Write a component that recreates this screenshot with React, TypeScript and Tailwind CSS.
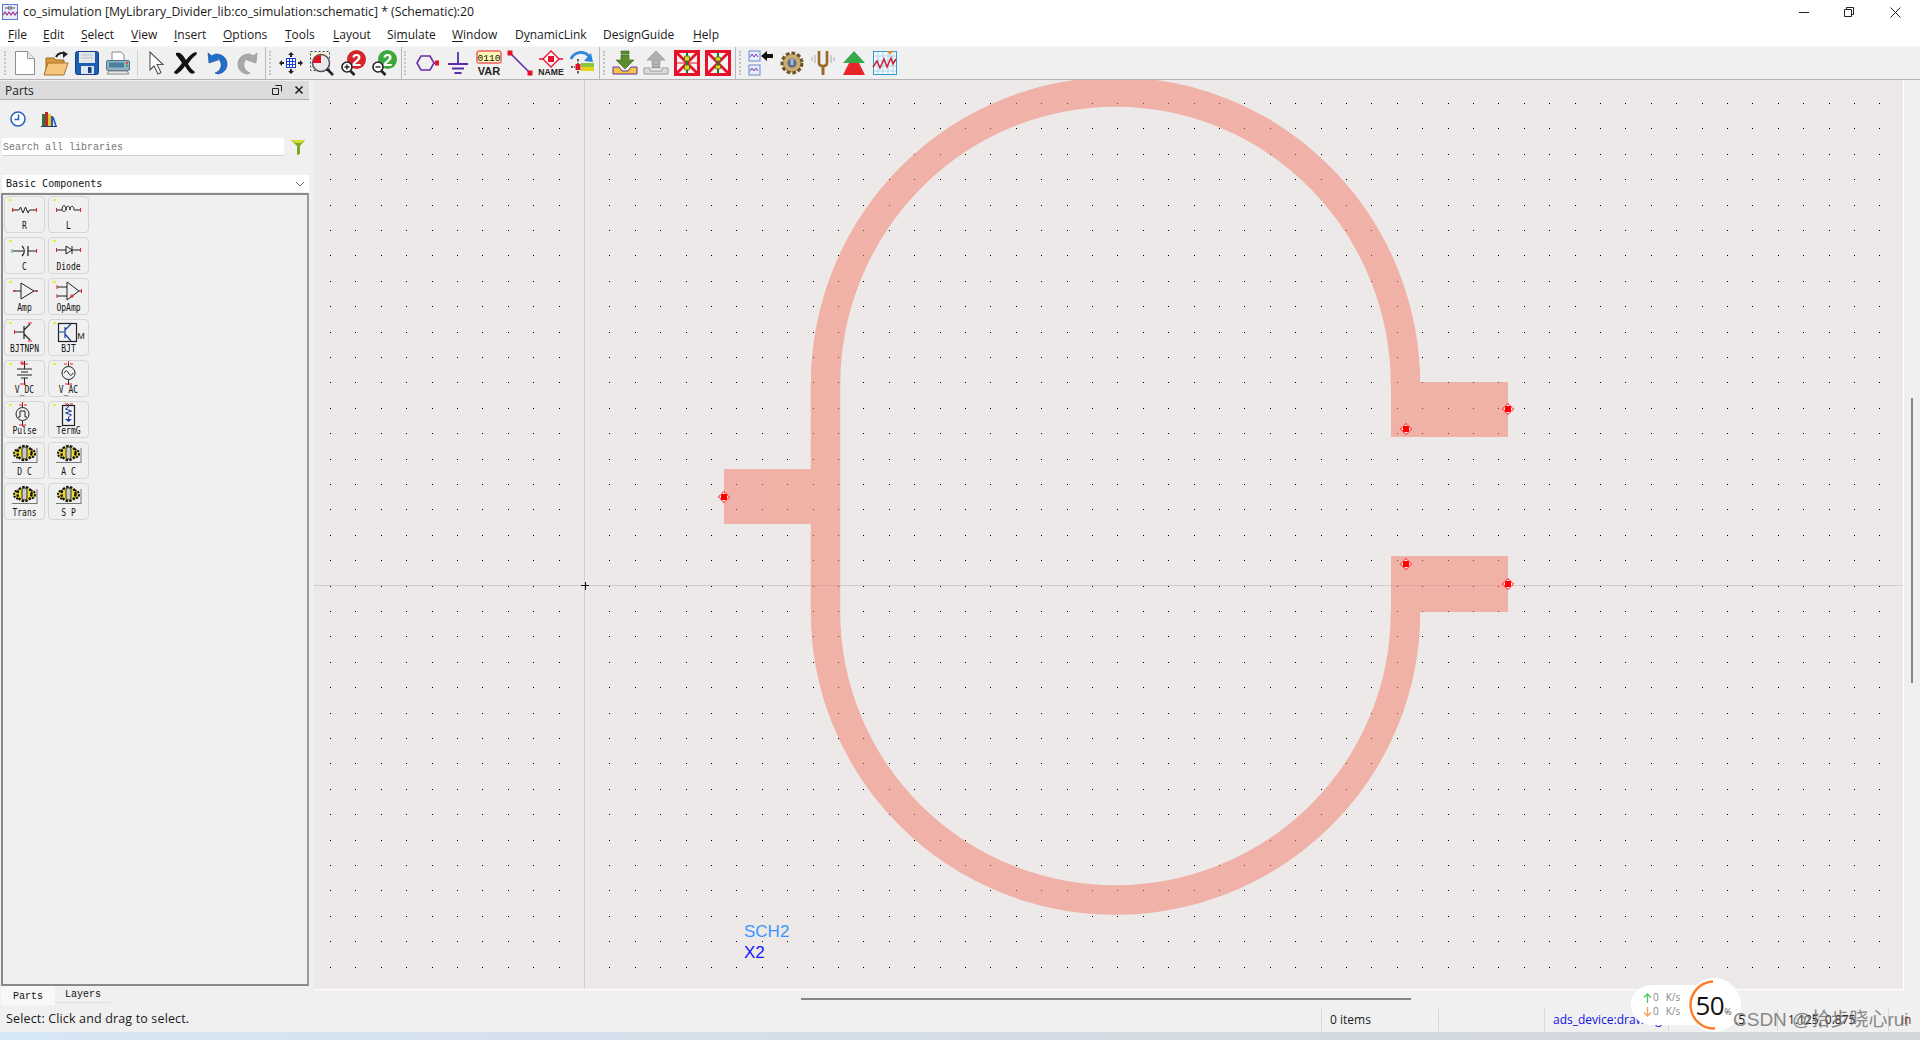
import React from "react";

const UI = { fontFamily: '"Open Sans","Noto Sans",sans-serif' };
const MONO = { fontFamily: '"DejaVu Sans Mono","Liberation Mono",monospace' };
const COURIER = { fontFamily: '"Liberation Mono",monospace' };

function I({ children }: { children: React.ReactNode }) {
  return (
    <div className="w-[31px] h-[26px] flex items-center justify-center shrink-0">
      <svg width="26" height="26" viewBox="0 0 26 26">{children}</svg>
    </div>
  );
}

function Handle({ ml }: { ml: string }) {
  return (
    <div className={`${ml} w-[3px] h-[24px] shrink-0 border-l-2 border-dotted border-[#c4c4c4]`} />
  );
}

const RedFrame = ({ v }: { v: number }) => (
  <I>
    <rect x="1.5" y="1.5" width="23" height="23" fill="#f4f4f4" stroke="#e8102a" strokeWidth="3" />
    <path d="M2 2 24 24M24 2 2 24" stroke="#e8102a" strokeWidth="2.8" />
    {v === 0 ? (
      <>
        <path d="M3 13h20" stroke="#e8102a" strokeWidth="1" />
        <path d="M13 3v20" stroke="#1c7a2e" strokeWidth="2" />
        <rect x="10.5" y="6" width="5" height="5" rx="1" fill="#e6d41c" stroke="#4a7a1c" />
        <rect x="10.5" y="15" width="5" height="5" rx="1" fill="#e6d41c" stroke="#4a7a1c" />
      </>
    ) : (
      <>
        <path d="M13 3v20" stroke="#1c7a2e" strokeWidth="2" />
        <rect x="10.5" y="7" width="5" height="4" rx="1" fill="#e6d41c" stroke="#4a7a1c" />
        <rect x="10.5" y="15" width="5" height="4" rx="1" fill="#e6d41c" stroke="#4a7a1c" />
      </>
    )}
  </I>
);

function Toolbar() {
  return (
    <div className="h-[34px] bg-[#f0f0f0] border-t border-[#f8f8f8] border-b border-b-[#b4b4b4] flex items-center relative shrink-0">
      <Handle ml="ml-[4px] absolute left-0" />
      <div className="ml-[9px] flex">
        <I>
          <path d="M3.5 1.5h12l7 7v16h-19z" fill="#fff" stroke="#8d8d8d" />
          <path d="M15.5 1.5v7h7" fill="#e8e8e8" stroke="#9a9a9a" />
        </I>
        <I>
          <path d="M3 8h8l2 2h8v14H3z" fill="#d99a3c" stroke="#9a6a20" />
          <path d="M1 25 5 13h20l-4 12z" fill="#f4c77c" stroke="#a8742a" />
          <path d="M13 7c2-4 6-5 9-3" fill="none" stroke="#222" strokeWidth="2" />
          <path d="M20 1l5 3-5 4z" fill="#222" />
        </I>
        <I>
          <rect x="1.5" y="1.5" width="23" height="23" rx="2" fill="#1b5fb4" stroke="#123f86" />
          <rect x="5" y="2" width="16" height="11" fill="#e6e6e6" />
          <path d="M7 5h12M7 8h12" stroke="#b8c4d4" />
          <rect x="7" y="16" width="13" height="8" fill="#dfe6ef" />
          <rect x="14" y="17" width="3.5" height="6" fill="#123f86" />
        </I>
        <I>
          <path d="M7 11V2h9l3 3v6" fill="#fff" stroke="#888" />
          <rect x="1.5" y="10.5" width="23" height="10" rx="1.5" fill="#8fb4c8" stroke="#4f7186" />
          <rect x="4" y="12.5" width="15" height="5" fill="#4a7f9e" />
          <rect x="21" y="12" width="2" height="2" fill="#e04a3a" />
          <rect x="21" y="15" width="2" height="2" fill="#4aa84a" />
          <path d="M4 21h18l2 3H2z" fill="#e8e8e8" stroke="#888" />
        </I>
      </div>
      <div className="ml-[4px] w-px h-[26px] bg-[#d2d2d2] shrink-0" />
      <div className="ml-px flex">
        <I>
          <path d="M9 2v18l4-4 4 8 3-1.5-4-8h6z" fill="#fff" stroke="#555" strokeWidth="1.1" transform="translate(-1 0)" />
        </I>
        <I>
          <path d="M3 3c3-1 6 0 10 7 3-4 6-7 10-8 1 1 1 2 0 3-4 3-6 6-8 9 2 3 4 6 7 8-1 2-3 2-5 1-2-2-4-5-5-7-2 3-5 6-8 8-2 0-3-1-3-2 3-3 6-6 8-9-2-3-4-6-6-8z" fill="#111" />
        </I>
        <I>
          <path d="M4 3l1 10 9-3-3-2c4 0 7 4 6 9-1 3-3 5-6 6l3 1c6-1 9-5 9-10 0-6-5-10-11-10-1 0-3 1-4 2z" fill="#1f6fd0" stroke="#123f86" strokeWidth=".6" />
        </I>
        <I>
          <path d="M22 3l-1 10-9-3 3-2c-4 0-7 4-6 9 1 3 3 5 6 6l-3 1C6 23 3 19 3 14 3 8 8 4 14 4c1 0 3 1 4 2z" fill="#a9a9a9" stroke="#8a8a8a" strokeWidth=".6" />
        </I>
      </div>
      <div className="ml-[2px] w-px h-[33px] bg-[#b8b8b8] shrink-0" />
      <Handle ml="ml-[3px]" />
      <div className="ml-[3px] flex">
        <I>
          <rect x="8.5" y="8.5" width="9" height="9" fill="#fff" stroke="#1a3fd0" />
          <path d="M11.5 8.5v9M14.5 8.5v9M8.5 11.5h9M8.5 14.5h9" stroke="#1a3fd0" />
          <path d="M13 2l-3 3h2v2h2V5h2zM13 24l-3-3h2v-2h2v2h2zM1 13l3-3v2h2v2H4v2zM25 13l-3-3v2h-2v2h2v2z" fill="#222" />
        </I>
        <I>
          <rect x="1.5" y="1.5" width="19" height="19" fill="#f3f1c8" stroke="#2a3aa0" strokeDasharray="2 2" />
          <circle cx="12" cy="13" r="8.5" fill="#e8e8ee" stroke="#555" strokeWidth="1.5" />
          <path d="M12 13V5a8 8 0 0 0-8 8z" fill="#e01020" />
          <path d="M18 19l6 6" stroke="#222" strokeWidth="2.5" />
        </I>
        <I>
          <circle cx="16.5" cy="9.5" r="9.5" fill="#d4242a" />
          <text x="16.5" y="15.5" textAnchor="middle" fontSize="17" fontWeight="700" fill="#fff" fontFamily="Liberation Sans">2</text>
          <circle cx="7" cy="17" r="5" fill="#fff" stroke="#222" strokeWidth="1.6" />
          <path d="M4.500 17h5M7 14.500v5" stroke="#222" strokeWidth="1.4" />
          <path d="M10.500 21l4 4" stroke="#222" strokeWidth="2.6" />
        </I>
        <I>
          <circle cx="16.5" cy="9.5" r="9.5" fill="#3ca83c" />
          <text x="16.5" y="15.5" textAnchor="middle" fontSize="17" fontWeight="700" fill="#fff" fontFamily="Liberation Sans">2</text>
          <circle cx="7" cy="17" r="5" fill="#fff" stroke="#222" strokeWidth="1.6" />
          <path d="M4.500 17h5" stroke="#222" strokeWidth="1.4" />
          <path d="M10.500 21l4 4" stroke="#222" strokeWidth="2.6" />
        </I>
      </div>
      <div className="ml-[2px] w-px h-[33px] bg-[#b8b8b8] shrink-0" />
      <Handle ml="ml-[2px]" />
      <div className="ml-[4px] flex">
        <I>
          <path d="M7 6h9l4 7-4 7H7l-4-7z" fill="none" stroke="#6a2da8" strokeWidth="1.6" />
          <path d="M20 13h3" stroke="#6a2da8" strokeWidth="1.4" />
          <rect x="21" y="10.5" width="4" height="5" fill="#e8102a" />
        </I>
        <I>
          <path d="M13 2v12M3 14h20M7 18.5h12M9.5 23h7" stroke="#5a2da8" strokeWidth="1.8" />
        </I>
        <I>
          <rect x="1" y="1" width="24" height="12" rx="1.5" fill="#fdf6b0" stroke="#e8102a" />
          <text x="13" y="10.5" textAnchor="middle" fontSize="9.5" fill="#111" fontFamily="Liberation Mono">0110</text>
          <text x="13" y="24.5" textAnchor="middle" fontSize="11" fontWeight="700" fill="#222" fontFamily="Liberation Sans">VAR</text>
        </I>
        <I>
          <path d="M3 3 23 23" stroke="#5a2da8" strokeWidth="1.6" />
          <rect x="0.5" y="0.5" width="5" height="5" fill="#e8102a" />
          <rect x="20.5" y="20.5" width="5" height="5" fill="#e8102a" />
        </I>
        <I>
          <path d="M1 9h6M19 9h6" stroke="#e8102a" strokeWidth="1.3" />
          <path d="M13 1l8 8-8 8-8-8z" fill="#fff" stroke="#e8102a" strokeWidth="1.3" />
          <rect x="10" y="6" width="6" height="6" fill="#e8102a" />
          <text x="13" y="25" textAnchor="middle" fontSize="8.6" fontWeight="700" fill="#222" fontFamily="Liberation Sans">NAME</text>
        </I>
        <I>
          <path d="M2 9c3-7 12-9 18-3" fill="none" stroke="#2a86d8" strokeWidth="2.8" />
          <path d="M15 11l9 1-2-9z" fill="#2a86d8" />
          <path d="M9 9v15" stroke="#222" strokeDasharray="2.5 1.5" strokeWidth="1.4" />
          <path d="M2 17h4" stroke="#222" strokeDasharray="2 1.2" strokeWidth="1.4" />
          <rect x="6.5" y="14" width="5" height="6" fill="#e8102a" />
          <rect x="12" y="13" width="13" height="4" fill="#8cc63c" />
          <rect x="12" y="17" width="13" height="4" fill="#e6d41c" />
        </I>
      </div>
      <div className="ml-[2px] w-px h-[33px] bg-[#b8b8b8] shrink-0" />
      <Handle ml="ml-[3px]" />
      <div className="ml-[3px] flex">
        <I>
          <path d="M9 1h8v3H9zM9 5h8v5h5l-9 9-9-9h5z" fill="#5a8c2e" stroke="#3c6a1c" strokeWidth=".6" />
          <path d="M1 17h6l3 4h6l3-4h6v7H1z" fill="#f4c640" stroke="#6a2da8" />
        </I>
        <I>
          <path d="M13 1l9 9h-5v5H9v-5H4zM9 16h8v2H9z" fill="#b0b0b0" stroke="#8c8c8c" strokeWidth=".6" />
          <path d="M1 18h6v3h12v-3h6v6H1z" fill="#dcdcdc" stroke="#9a9a9a" />
        </I>
        <RedFrame v={0} />
        <RedFrame v={1} />
      </div>
      <div className="ml-[2px] w-px h-[33px] bg-[#b8b8b8] shrink-0" />
      <Handle ml="ml-[3px]" />
      <div className="ml-[3px] flex">
        <I>
          <rect x="1" y="1" width="11" height="10" fill="#e6ecf8" stroke="#6a8ad0" />
          <rect x="1" y="15" width="11" height="10" fill="#e6ecf8" stroke="#6a8ad0" />
          <path d="M2 7l2-3 2 3 2-3 2 3M2 21l2-3 2 3 2-3 2 3" fill="none" stroke="#7a3ab0" />
          <path d="M13 6l6-5v3h6v4h-6v3z" fill="#111" />
        </I>
        <I>
          <circle cx="13" cy="13" r="9.500" fill="#b89a5a" stroke="#6a5428" strokeWidth="4" strokeDasharray="3.5 2" />
          <circle cx="13" cy="13" r="8.500" fill="#c8ac70" />
          <circle cx="13" cy="13" r="4.500" fill="#5a6a8a" />
          <rect x="11.5" y="9" width="3" height="6" fill="#a8b8d0" />
        </I>
        <I>
          <path d="M9 1v12c0 2 2 3 4 3s4-1 4-3V1" fill="none" stroke="#9a6a2a" strokeWidth="2.6" />
          <path d="M13 16v9" stroke="#9a6a2a" strokeWidth="3" />
          <path d="M5 5v8M2 7v4M21 5v8M24 7v4" stroke="#aaa" />
        </I>
        <I>
          <path d="M13 1l11 12h-6v0H8v0H2z" fill="#3aa84a" />
          <path d="M8 13h10l6 12H2z" fill="#e8242a" />
        </I>
        <I>
          <rect x="1.5" y="1.5" width="23" height="23" fill="#f4f9fc" stroke="#3a9ad0" />
          <path d="M6 2v22M11 2v22M16 2v22M21 2v22M2 6h22M2 11h22M2 16h22M2 21h22" stroke="#9cd0e8" strokeWidth=".8" />
          <path d="M1 17l4-6 3 7 4-9 3 8 4-9 2 6 3-5" fill="none" stroke="#c81e3a" strokeWidth="1.5" />
          <path d="M15 1h6l-3 4z" fill="#e88a2a" />
        </I>
      </div>
    </div>
  );
}

const W = "#222";
const Rd = "#ee1c24";
function Pins({ d }: { d: string }) {
  return <path d={d} stroke={Rd} strokeWidth="1" fill="none" />;
}
function Gear() {
  return (
    <>
      <path d="M8 20.500h25M33 6v15" stroke="#777" fill="none" />
      <circle cx="14" cy="11.500" r="4" fill="#f4e23a" stroke="#111" strokeWidth="2" strokeDasharray="2 1" />
      <circle cx="27" cy="11.500" r="4" fill="#f4e23a" stroke="#111" strokeWidth="2" strokeDasharray="2 1" />
      <circle cx="20.500" cy="11" r="7" fill="#f4e23a" stroke="#111" strokeWidth="2.400" strokeDasharray="2.500 1.300" />
      <circle cx="20.500" cy="11" r="5.500" fill="#ecd92e" />
      <rect x="18" y="5" width="5" height="12" rx="2" fill="#c8ccc8" stroke="#333" strokeWidth="1" />
    </>
  );
}

const partIcons: Record<string, React.ReactNode> = {
  R: (
    <>
      <path d="M9 14h6l1.5-3 2.5 6 2.5-6 2.5 6 1.5-3h6" stroke={W} fill="none" />
      <Pins d="M8.500 12v4M32.500 12v4M8.500 14h2M30.500 14h2" />
    </>
  ),
  L: (
    <>
      <path d="M9 14h5c0-6 4-6 4 0 0-5 4-5 4 0 0-5 4-5 4 0h6M14 14c1 2 3 2 4 0" stroke={W} fill="none" />
      <Pins d="M32.500 12v4M8.500 12v4" />
    </>
  ),
  C: (
    <>
      <path d="M9 14h11M24 14h9M24 9v10" stroke={W} fill="none" strokeWidth="1.2" />
      <path d="M18 9c3 3 3 7 0 10" stroke={W} fill="none" strokeWidth="1.2" />
      <Pins d="M32.500 12v4" />
      <path d="M8 12v4" stroke="#2aa8a8" />
    </>
  ),
  Diode: (
    <>
      <path d="M9 13h9M24 13h9M24 9v8M18 9v8l6-4z" stroke={W} fill="none" />
      <Pins d="M8.500 11v4M32.500 11v4" />
    </>
  ),
  Amp: (
    <>
      <path d="M9 13h8M30 13h4M17 5v16l13-8z" stroke={W} fill="none" />
      <Pins d="M9 13h3M31 13h3" />
    </>
  ),
  OpAmp: (
    <>
      <path d="M9 9h10M9 18h10M31 13h3M19 4v18l12-9z" stroke={W} fill="none" />
      <path d="M22 18h4M24 16v4" stroke={Rd} />
      <Pins d="M9 7v4M9 16v4M33.500 11v4" />
    </>
  ),
  BJTNPN: (
    <>
      <path d="M10 13h10M20 7v13M20 11l6-6M20 15l6 6" stroke={W} fill="none" strokeWidth="1.2" />
      <Pins d="M10.500 11v4M24 4h4M24 22h4" />
    </>
  ),
  BJT: (
    <>
      <rect x="10.500" y="4.500" width="18" height="18" fill="none" stroke="#222" strokeWidth="1.2" />
      <path d="M10 13h7M17 8v11M17 11l6-6M17 15l6 7" stroke="#163f9c" fill="none" strokeWidth="1.2" />
      <text x="33" y="20" fontSize="9" fill="#222" fontFamily="Liberation Sans" textAnchor="middle">M</text>
    </>
  ),
  V_DC: (
    <>
      <path d="M20.500 1v8M13 9h15M17 12h7M13 15h15M17 18h7M20.500 18v7" stroke={W} fill="none" />
      <Pins d="M18 4h6M16 3h4M18 1v4M16 24h6" />
    </>
  ),
  V_AC: (
    <>
      <circle cx="20.500" cy="13" r="6.500" fill="none" stroke={W} />
      <path d="M16 13c2-3 3-3 4.500 0s3 3 4.500 0M20.500 2v4M20.500 20v5" stroke={W} fill="none" />
      <Pins d="M16 4h3M22 4h3M20.500 1v3M17 24h7" />
    </>
  ),
  Pulse: (
    <>
      <circle cx="18.500" cy="13" r="6.500" fill="none" stroke={W} />
      <path d="M14 16h2v-6h5v6h2M18.500 2v4M18.500 20v5" stroke={W} fill="none" />
      <Pins d="M15 4h3M20 4h3M18.500 1v3M15 24h7" />
    </>
  ),
  TermG: (
    <>
      <rect x="14.500" y="4.500" width="12" height="20" fill="none" stroke="#222" strokeWidth="1.2" />
      <path d="M20.500 3v3l-3 2 6 2-6 2 6 2-3 2v3" stroke="#163f9c" fill="none" />
      <path d="M17 18h7l-3.500 3z" fill="#163f9c" />
      <Pins d="M17 3h3M22 3h3" />
    </>
  ),
  DC: <Gear />, AC: <Gear />, Trans: <Gear />, SP: <Gear />,
};

const parts: [string, string, boolean][] = [
  ["R", "R", true], ["L", "L", true], ["C", "C", true], ["Diode", "Diode", true],
  ["Amp", "Amp", true], ["OpAmp", "OpAmp", true], ["BJTNPN", "BJTNPN", true], ["BJT", "BJT", true],
  ["V_DC", "V_DC", true], ["V_AC", "V_AC", true], ["Pulse", "Pulse", true], ["TermG", "TermG", true],
  ["DC", "D C", false], ["AC", "A C", false], ["Trans", "Trans", false], ["SP", "S P", false],
];

function PartButton({ id, label, dot }: { id: string; label: string; dot: boolean }) {
  return (
    <div className="relative w-[41px] h-[37px] rounded-[4px] border border-[#d6d6d6] bg-[#f0f0f0] flex flex-col items-center">
      {dot && <div className="absolute left-[4px] top-[2px] w-[3px] h-[2px] bg-[#f0e840]" />}
      <svg width="41" height="26" viewBox="0 0 41 26" className="shrink-0 -mt-px">{partIcons[id]}</svg>
      <div className="text-[8px] leading-[9px] text-[#111] whitespace-pre scale-y-125 -mt-px" style={MONO}>{label}</div>
    </div>
  );
}

function LeftPanel() {
  return (
    <div className="w-[309px] h-full pt-px flex flex-col shrink-0 bg-[#f0f0f0]">
      <div className="h-[19px] bg-[#dcdcdc] border-b border-[#b0b0b0] flex items-center justify-between shrink-0 pr-[5px]">
        <span className="ml-[5px] pt-px text-[12px] text-[#222]" style={UI}>Parts</span>
        <div className="flex items-center gap-[12px]">
          <svg width="10" height="10" viewBox="0 0 10 10"><path d="M3.500.5h6v6M.5 3.500h6v6h-6z" fill="none" stroke="#222" /></svg>
          <svg width="10" height="10" viewBox="0 0 10 10"><path d="M1.500 1.500l7 7M8.500 1.500l-7 7" stroke="#222" strokeWidth="1.600" /></svg>
        </div>
      </div>
      <div className="h-[38px] flex items-center pl-[10px] gap-[15px] shrink-0">
        <svg width="16" height="16" viewBox="0 0 16 16">
          <circle cx="8" cy="8" r="7" fill="#fff" stroke="#2a62c0" strokeWidth="1.600" />
          <path d="M8.500 3.500v5H4.500" fill="none" stroke="#2a62c0" strokeWidth="1.600" />
        </svg>
        <svg width="16" height="16" viewBox="0 0 16 16">
          <path d="M0 15.500h16" stroke="#1e3a78" />
          <rect x="1" y="3" width="3" height="12" fill="#2a7a3a" />
          <rect x="4" y="1" width="3" height="14" fill="#c0282a" />
          <rect x="7" y="3" width="3" height="12" fill="#e6c820" />
          <rect x="10" y="5" width="2" height="10" fill="#2a5ac0" />
          <path d="M12 6l3 9" stroke="#2a5ac0" strokeWidth="1.600" />
        </svg>
      </div>
      <div className="h-[18px] flex items-center shrink-0">
        <div className="ml-[2px] w-[282px] h-[18px] bg-white border-b border-[#d0d0d0] flex items-center pl-[1px] pt-px">
          <span className="text-[10px] text-[#777]" style={COURIER}>Search all libraries</span>
        </div>
        <svg width="14" height="16" viewBox="0 0 14 16" className="ml-[7px]">
          <path d="M0 1h14L9 7v8l-3 1V7z" fill="#7ca81e" />
          <path d="M0 1h14L10 4H4z" fill="#d8dc2a" />
        </svg>
      </div>
      <div className="ml-[2px] mt-[19px] h-[17px] bg-white flex items-center justify-between shrink-0 pl-[4px] pr-[4px]">
        <span className="text-[10px] text-[#111]" style={MONO}>Basic Components</span>
        <svg width="10" height="6" viewBox="0 0 10 6"><path d="M1 1l4 4 4-4" fill="none" stroke="#777" /></svg>
      </div>
      <div className="ml-px mt-px flex-1 min-h-0 border-2 border-[#8a8a8a] border-r-[#9a9a9a] pl-px pt-px">
        <div className="grid grid-cols-[41px_41px] gap-x-[3px] gap-y-[4px]">
          {parts.map(([id, label, dot]) => <PartButton key={id} id={id} label={label} dot={dot} />)}
        </div>
      </div>
      <div className="h-[20px] flex shrink-0 text-[10px] text-[#111]" style={COURIER}>
        <div className="ml-px w-[54px] h-[19px] pt-[2px] bg-[#f8f8f8] flex items-center justify-center">Parts</div>
        <div className="w-[56px] h-[17px] border-b border-[#e0e0e0] flex items-center justify-center">Layers</div>
      </div>
    </div>
  );
}

const dotPath = (() => {
  let d = "";
  for (let i = 0; i < 63; i++) {
    for (let j = 0; j < 36; j++) {
      const x = Math.floor(330.5 + 25.4 * i);
      const y = Math.floor(103.5 + 25.4 * j);
      d += `M${x} ${y}h1v1h-1z`;
    }
  }
  return d;
})();

function Pin({ x, y }: { x: number; y: number }) {
  return (
    <g>
      <path d={`M${x} ${y - 5.500}L${x + 5.500} ${y}L${x} ${y + 5.500}L${x - 5.500} ${y}Z`} fill="#fff" fillOpacity=".7" stroke="#ff2020" strokeWidth="1.100" strokeDasharray="1.500 .7" />
      <rect x={x - 2.500} y={y - 3} width="5" height="6" fill="#ff0000" />
      <rect x={x - 3} y={y - 2.500} width="6" height="5" fill="#ff0000" />
    </g>
  );
}

function Canvas() {
  return (
    <div className="flex-1 min-h-0 bg-[#ede9e8] border-r border-b border-white overflow-hidden">
      <svg width="1589" height="910" viewBox="314 80 1589 910" className="block">
        <path d={dotPath} fill="#000" shapeRendering="crispEdges" />
        <path d="M314 585.500H1903M584.500 80V990" stroke="#d2cecd" shapeRendering="crispEdges" />
        <path d="M581 585.500h8M585 581.500v8" stroke="#111" shapeRendering="crispEdges" />
        <g opacity="0.5">
          <path d="M825.500 385A290 293 0 0 1 1405.500 385M825.500 612A290 288 0 0 0 1405.500 612M825.500 385V612" fill="none" stroke="#f37b68" strokeWidth="29.500" />
          <rect x="724" y="469" width="87" height="55" fill="#f37b68" />
          <rect x="1391" y="382" width="117" height="55" fill="#f37b68" />
          <rect x="1391" y="556" width="117" height="56" fill="#f37b68" />
        </g>
        <Pin x={724} y={497} />
        <Pin x={1508} y={409} />
        <Pin x={1406} y={429} />
        <Pin x={1406} y={564} />
        <Pin x={1508} y={584} />
        <text x="744" y="937" fontSize="17" fill="#3a96ff" fontFamily="Liberation Sans">SCH2</text>
        <text x="744" y="958" fontSize="17" fill="#1414ff" fontFamily="Liberation Sans">X2</text>
      </svg>
    </div>
  );
}

function U({ children }: { children: string }) {
  return <span className="underline underline-offset-2">{children}</span>;
}

function Menu() {
  const items: React.ReactNode[] = [
    <><U>F</U>ile</>, <><U>E</U>dit</>, <><U>S</U>elect</>, <><U>V</U>iew</>, <><U>I</U>nsert</>,
    <><U>O</U>ptions</>, <><U>T</U>ools</>, <><U>L</U>ayout</>, <>Si<U>m</U>ulate</>, <><U>W</U>indow</>,
    <>D<U>y</U>namicLink</>, <>DesignGuide</>, <><U>H</U>elp</>,
  ];
  const widths = [35, 38, 50, 43, 49, 62, 48, 54, 65, 63, 88, 90, 40];
  return (
    <div className="h-[22px] bg-white flex items-center pl-[8px] text-[12px] text-[#1a1a1a] shrink-0" style={UI}>
      {items.map((it, i) => (
        <div key={i} style={{ width: widths[i] }} className="shrink-0 whitespace-nowrap">{it}</div>
      ))}
    </div>
  );
}

function Sep() {
  return <div className="w-px h-[22px] bg-[#d8d8d8] shrink-0" />;
}

function StatusBar() {
  return (
    <div className="h-[26px] pt-px bg-[#f0f0f0] flex items-center text-[12px] text-[#1a1a1a] shrink-0" style={UI}>
      <div className="w-[1321px] pl-[6px] text-[12.500px] tracking-[0.15px]">Select: Click and drag to select.</div>
      <Sep />
      <div className="w-[116px] pl-[8px]">0 items</div>
      <Sep />
      <div className="w-[105px]" />
      <Sep />
      <div className="w-[123px] pl-[8px] text-[#1010e0] whitespace-nowrap">ads_device:drawing</div>
      <Sep />
      <div className="w-[108px] pl-[66px]">.5</div>
      <Sep />
      <div className="w-[110px] pl-[10px] whitespace-nowrap">1.125, 0.875</div>
      <Sep />
      <div className="pl-[12px] text-[#7a2020]">in</div>
    </div>
  );
}

export default function App() {
  return (
    <div className="relative w-[1920px] h-[1040px] overflow-hidden bg-[#f0f0f0] flex flex-col">
      <div className="h-[24px] bg-white flex items-center shrink-0 relative">
        <svg width="16" height="16" viewBox="0 0 16 16" className="ml-[2px]">
          <rect x="0.500" y="0.500" width="15" height="15" fill="#e8ecf8" stroke="#5a7ad0" />
          <path d="M1 11l2-3 2 3 2-3 2 3 2-3 2 3 2-3" fill="none" stroke="#a0308a" strokeWidth="1.200" />
          <path d="M3 4h4M9 4h4M7 2v4M9 2v4" stroke="#555" />
        </svg>
        <span className="ml-[5px] text-[12.270px] text-[#1a1a1a] whitespace-nowrap" style={UI}>
          co_simulation [MyLibrary_Divider_lib:co_simulation:schematic] * (Schematic):20
        </span>
        <div className="ml-auto flex items-center">
          <svg width="10" height="10" viewBox="0 0 10 10" className="mr-[35px]"><path d="M0 5.500h10" stroke="#222" /></svg>
          <svg width="10" height="10" viewBox="0 0 10 10" className="mr-[36px]"><path d="M2.500 2V.5h7v7H8M.5 2.500h7v7h-7z" fill="none" stroke="#222" /></svg>
          <svg width="11" height="11" viewBox="0 0 11 11" className="mr-[19px]"><path d="M.5.5l10 10M10.500.5l-10 10" stroke="#222" /></svg>
        </div>
      </div>
      <Menu />
      <Toolbar />
      <div className="flex-1 min-h-0 flex">
        <LeftPanel />
        <div className="ml-[5px] w-[1590px] flex flex-col shrink-0">
          <Canvas />
          <div className="h-[16px] shrink-0 relative">
            <div className="absolute left-[487px] top-[8px] w-[610px] h-[2px] bg-[#858585]" />
          </div>
        </div>
        <div className="flex-1 relative">
          <div className="absolute left-[7px] top-[318px] w-[2px] h-[285px] bg-[#858585]" />
        </div>
      </div>
      <StatusBar />
      <div className="h-[8px] shrink-0 bg-gradient-to-r from-[#d6e7f5] via-[#d4dde6] to-[#d2d5d9]" />

      <div className="absolute left-[1631px] top-[985px] w-[100px] h-[40px] rounded-full bg-white text-[10px] text-[#888]" style={UI}>
        <div className="absolute left-[12px] top-[5px] flex items-center gap-px">
          <svg width="9" height="10" viewBox="0 0 9 10"><path d="M4.500 10V1M1 4.500l3.500-3.500 3.500 3.500" fill="none" stroke="#4cc76a" strokeWidth="1.300" /></svg>
          <span>0</span><span className="ml-[6px]">K/s</span>
        </div>
        <div className="absolute left-[12px] top-[19px] flex items-center gap-px">
          <svg width="9" height="10" viewBox="0 0 9 10"><path d="M4.500 0v9M1 5.500l3.500 3.500 3.500-3.500" fill="none" stroke="#f5a05a" strokeWidth="1.300" /></svg>
          <span>0</span><span className="ml-[6px]">K/s</span>
        </div>
      </div>
      <div className="absolute left-[1687px] top-[978px] w-[54px] h-[54px] rounded-full bg-white flex items-center justify-center">
        <svg width="54" height="54" viewBox="0 0 54 54" className="absolute left-0 top-0">
          <path d="M26 3.500A23.500 23.500 0 0 0 28 50.500" fill="none" stroke="#ff7a22" strokeWidth="2.400" />
        </svg>
        <div className="relative flex items-baseline text-[#111] pr-[1px]" style={UI}>
          <span className="text-[26px] leading-none tracking-[-0.5px]">50</span>
          <span className="text-[9px] leading-none text-[#555]">%</span>
        </div>
      </div>
      <div
        className="absolute left-[1733px] top-[1007px] text-[19px] leading-[26px] text-[#6e6e6e] opacity-80 whitespace-nowrap"
        style={{ fontFamily: '"Liberation Sans","Noto Sans CJK SC",sans-serif' }}
      >
        CSDN @拾步晓心rui
      </div>
    </div>
  );
}
